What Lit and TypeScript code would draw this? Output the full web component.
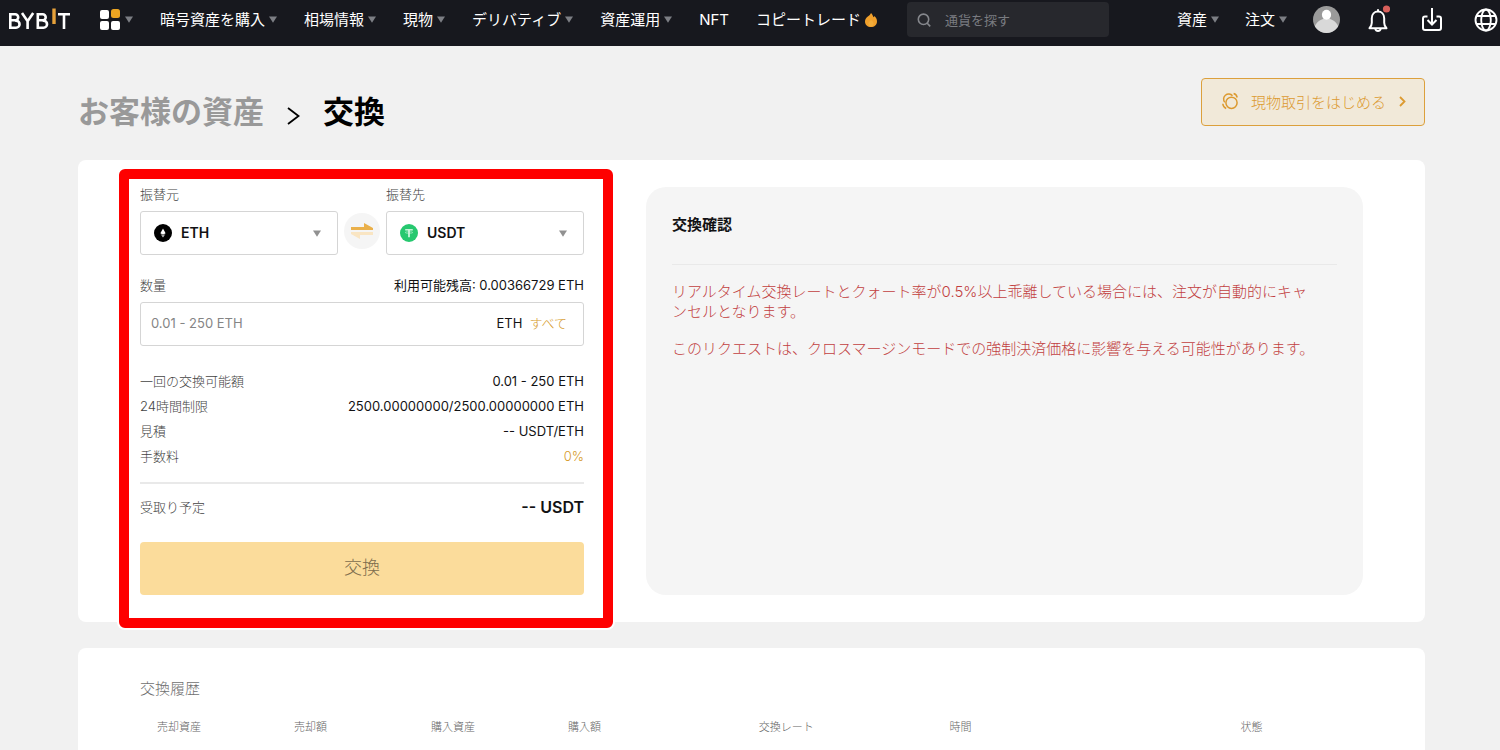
import { LitElement, html, css, nothing } from "lit";
import { customElement, property } from "lit/decorators.js";

const caret = html`<svg class="caret" viewBox="0 0 8 7" width="8" height="7" aria-hidden="true">
  <path d="M0 0.5h8L4 6.8z" fill="currentColor" />
</svg>`;

const sharedStyles = css`
  *,
  *::before,
  *::after {
    box-sizing: border-box;
  }
  svg {
    display: block;
    flex: none;
  }
  a {
    color: inherit;
    text-decoration: none;
  }
  button,
  input,
  select {
    font: inherit;
    color: inherit;
    margin: 0;
    padding: 0;
    border: 0;
    background: none;
  }
  button {
    cursor: pointer;
  }
`;

interface NavItem {
  label: string;
  menu?: boolean;
  hot?: boolean;
}

const NAV: NavItem[] = [
  { label: "暗号資産を購入", menu: true },
  { label: "相場情報", menu: true },
  { label: "現物", menu: true },
  { label: "デリバティブ", menu: true },
  { label: "資産運用", menu: true },
  { label: "NFT" },
  { label: "コピートレード", hot: true },
];

@customElement("site-header")
export class SiteHeader extends LitElement {
  static styles = [
    sharedStyles,
    css`
      :host {
        display: block;
      }
      .bar {
        display: flex;
        align-items: center;
        height: 46px;
        padding: 0 2px 7px 8px;
        background: #17181e;
        color: #fff;
        font-size: 15px;
        line-height: 24px;
        white-space: nowrap;
      }
      .apps {
        display: flex;
        align-items: center;
        gap: 4px;
        margin-left: 29px;
      }
      .caret {
        color: #7c7e84;
      }
      .nav {
        display: flex;
        align-items: center;
        gap: 27px;
        margin-left: 27px;
      }
      .item {
        display: flex;
        align-items: center;
        gap: 4px;
      }
      .search {
        display: flex;
        align-items: center;
        gap: 14px;
        width: 202px;
        height: 35px;
        margin-left: 30px;
        padding: 0 10px;
        border-radius: 4px;
        background: #27282d;
        color: #85878c;
      }
      .search input {
        flex: 1;
        min-width: 0;
        font-size: 13px;
        outline: none;
      }
      .search input::placeholder {
        color: #797b80;
        opacity: 1;
      }
      .account {
        display: flex;
        align-items: center;
        gap: 26px;
        margin-left: auto;
      }
      .tools {
        display: flex;
        align-items: center;
        gap: 30px;
      }
    `,
  ];

  render() {
    return html`<header class="bar">
      <a href="#" aria-label="Bybit">
        <svg width="62" height="24" viewBox="0 0 62 24" fill="none" stroke="#fff" stroke-width="2.6">
          <path d="M2.3 6.3v13.4M1 6.3h6.2a3 3 0 0 1 0 6H2.3M7.2 12.6h.8a3.4 3.4 0 0 1 0 7.1H1" />
          <path d="M14 5l5.6 8.3L25.2 5M19.6 12.5V21" />
          <path d="M29.8 6.3v13.4M28.5 6.3h6.2a3 3 0 0 1 0 6h-4.9M34.7 12.6h.8a3.4 3.4 0 0 1 0 7.1h-7" />
          <path d="M46 0.5v15.5" stroke="#e6a13a" stroke-width="3.4" />
          <path d="M50 6.3h12M56 6.3V21" />
        </svg>
      </a>
      <button class="apps" aria-label="Apps">
        <svg width="22" height="22" viewBox="0 0 22 22" fill="#fff">
          <rect x="1" y="1" width="9" height="9" rx="2" />
          <rect x="12" y="0" width="9" height="9" rx="2.5" fill="#eba422" />
          <rect x="1" y="12" width="9" height="9" rx="2" />
          <rect x="12" y="12" width="9" height="9" rx="2" />
        </svg>
        ${caret}
      </button>
      <nav class="nav">
        ${NAV.map(
          (item) => html`<a class="item" href="#">
            <span>${item.label}</span>
            ${item.menu ? caret : nothing}
            ${item.hot
              ? html`<svg width="12" height="14" viewBox="0 0 12 14">
                  <path
                    d="M6 0C7.400 1.500 8.100 2.900 8.500 4.300c.5-.3.800-.7.900-1.200C11.200 4.700 12 6.400 12 8.400 12 11.600 9.400 14 6 14S0 11.600 0 8.400C0 6.400 1.100 4.900 2.800 3.600 4.300 2.500 5.400 1.500 6 0z"
                    fill="#f0a02c"
                  />
                  <path d="M6 7c1.500 1.200 2.600 2.200 2.600 3.700A2.600 2.600 0 0 1 6 13.200a2.600 2.600 0 0 1-2.600-2.500C3.400 9.200 4.700 8.300 6 7z" fill="#f2ac3a" />
                </svg>`
              : nothing}
          </a>`
        )}
      </nav>
      <label class="search">
        <svg width="14" height="14" viewBox="0 0 14 14" fill="none" stroke="currentColor" stroke-width="1.600">
          <circle cx="6.500" cy="6.300" r="5.200" />
          <path d="M10 10l3.200 3.400" />
        </svg>
        <input type="search" placeholder="通貨を探す" aria-label="通貨を探す" />
      </label>
      <div class="account">
        <a class="item" href="#"><span>資産</span>${caret}</a>
        <a class="item" href="#"><span>注文</span>${caret}</a>
        <button aria-label="アカウント">
          <svg width="27" height="27" viewBox="0 0 27 27">
            <defs>
              <clipPath id="disc"><circle cx="13.500" cy="13.500" r="13.500" /></clipPath>
            </defs>
            <g clip-path="url(#disc)">
              <rect width="27" height="27" fill="#9a9a9a" />
              <path d="M0 27c.6-8 5.500-14.500 13.500-14.500S26.400 19 27 27z" fill="#d9d9d9" />
              <ellipse cx="13.500" cy="8.700" rx="4.600" ry="5" fill="#fff" />
            </g>
          </svg>
        </button>
        <div class="tools">
          <button aria-label="通知">
            <svg width="24" height="30" viewBox="0 0 24 30" fill="none" stroke="#fff" stroke-width="2">
              <path d="M12 4.200v2M3.500 23.300c1.700-1.800 2.300-3 2.300-5.500v-4.500c0-4 2.600-6.700 6.200-6.700s6.200 2.700 6.200 6.700v4.500c0 2.500.6 3.700 2.300 5.500z" stroke-linejoin="round" />
              <path d="M9.300 23.800c.4 1.600 1.300 2.300 2.700 2.300s2.300-.7 2.700-2.300" />
              <circle cx="20.500" cy="4" r="3.600" fill="#d9605b" stroke="none" />
            </svg>
          </button>
          <button aria-label="ダウンロード">
            <svg width="24" height="26" viewBox="0 0 24 26" fill="none" stroke="#fff" stroke-width="2">
              <path d="M7.500 9.500H5a2 2 0 0 0-2 2V21a2 2 0 0 0 2 2h14a2 2 0 0 0 2-2v-9.500a2 2 0 0 0-2-2h-2.500" />
              <path d="M12 1v16M7.500 13l4.500 4.500 4.500-4.500" />
            </svg>
          </button>
          <button aria-label="言語">
            <svg width="24" height="24" viewBox="0 0 24 24" fill="none" stroke="#fff" stroke-width="1.900">
              <circle cx="12" cy="12" r="10.500" />
              <ellipse cx="12" cy="12" rx="4.800" ry="10.500" />
              <path d="M2.500 8h19M2.500 16h19" />
            </svg>
          </button>
        </div>
      </div>
    </header>`;
  }
}

const ethCoin = html`<svg width="18" height="18" viewBox="0 0 18 18" aria-hidden="true">
  <circle cx="9" cy="9" r="9" fill="#000" />
  <path d="M9 4.600l2.600 4.600L9 10.800 6.400 9.200z" fill="#fff" />
  <path d="M6.600 10L9 11.500 11.400 10 9 13.400z" fill="#cfcfcf" />
</svg>`;

const usdtCoin = html`<svg width="18" height="18" viewBox="0 0 18 18" aria-hidden="true">
  <circle cx="9" cy="9" r="9" fill="#26c86f" />
  <g fill="none" stroke="#d5f6e3">
    <path d="M5.200 5.800h7.600" stroke-width="1.400" />
    <path d="M9 5.800v7.400" stroke-width="1.700" />
    <ellipse cx="9" cy="8.500" rx="3.800" ry=".8" stroke-width=".5" />
  </g>
</svg>`;

@customElement("coin-select")
export class CoinSelect extends LitElement {
  @property() label = "";
  @property() coin = "ETH";

  static styles = [
    sharedStyles,
    css`
      :host {
        display: block;
        min-width: 0;
      }
      .label {
        display: block;
        font-size: 13px;
        line-height: 14px;
        margin-bottom: 10px;
        color: #444;
        font-weight: 300;
      }
      .box {
        display: flex;
        align-items: center;
        height: 44px;
        padding: 0 16px 0 13px;
        border: 1px solid #d5d5d5;
        border-radius: 3px;
        background: #fff;
      }
      .box select {
        flex: 1;
        min-width: 0;
        height: 42px;
        padding-left: 9px;
        appearance: none;
        font-size: 14px;
        font-weight: 600;
        color: #121214;
        outline: none;
      }
      .caret {
        color: #919191;
      }
    `,
  ];

  render() {
    return html`<label class="label" for="coin">${this.label}</label>
      <div class="box">
        ${this.coin === "ETH" ? ethCoin : usdtCoin}
        <select id="coin">
          <option>${this.coin}</option>
        </select>
        ${caret}
      </div>`;
  }
}

const LIMITS = [
  { label: "一回の交換可能額", value: "0.01 - 250 ETH" },
  { label: "24時間制限", value: "2500.00000000/2500.00000000 ETH" },
  { label: "見積", value: "-- USDT/ETH" },
  { label: "手数料", value: "0%", accent: true },
];

@customElement("exchange-form")
export class ExchangeForm extends LitElement {
  static styles = [
    sharedStyles,
    css`
      :host {
        display: block;
        position: relative;
        font-size: 13px;
        line-height: 16px;
        color: #121214;
      }
      .highlight {
        position: absolute;
        inset: -18px -29px -33px -21px;
        border: 10px solid #fe0000;
        border-radius: 6px;
        box-shadow: 0 0 0 2px #fff;
        pointer-events: none;
      }
      .pair {
        display: grid;
        grid-template-columns: 1fr 48px 1fr;
        align-items: end;
      }
      .swap {
        display: grid;
        place-items: center;
        justify-self: center;
        width: 36px;
        height: 36px;
        margin-bottom: 6px;
        border-radius: 50%;
        background: #f5f5f5;
      }
      .line {
        display: flex;
        justify-content: space-between;
        align-items: center;
      }
      .amount {
        margin-top: 22px;
      }
      .muted {
        color: #444;
        font-weight: 300;
      }
      .accent {
        color: #d69a2a;
        font-weight: 300;
      }
      .field {
        display: flex;
        align-items: center;
        height: 44px;
        margin-top: 9px;
        padding: 0 16px 2px 10px;
        border: 1px solid #d5d5d5;
        border-radius: 3px;
        background: #fff;
      }
      .field input {
        flex: 1;
        min-width: 0;
        outline: none;
      }
      .field input::placeholder {
        color: #858585;
        opacity: 1;
      }
      .field button {
        margin-left: 7px;
      }
      .limits {
        display: grid;
        gap: 9px;
        margin: 27px 0 0;
        padding-bottom: 18px;
        border-bottom: 2px solid #e9e9e9;
      }
      .limits dt,
      .limits dd {
        margin: 0;
      }
      .receive {
        margin-top: 11px;
        line-height: 24px;
      }
      .total {
        font-size: 16px;
        font-weight: 600;
      }
      .submit {
        display: block;
        width: 100%;
        height: 53px;
        margin-top: 23px;
        padding-bottom: 2px;
        border-radius: 4px;
        background: #fbdc9b;
        color: #7d6c4d;
        font-size: 18px;
        font-weight: 300;
      }
    `,
  ];

  render() {
    return html`
      <div class="pair">
        <coin-select label="振替元" coin="ETH"></coin-select>
        <button class="swap" aria-label="入れ替え">
          <svg width="22" height="18" viewBox="0 0 22 18">
            <path d="M0 5h13V1l9 5v2H0z" fill="#eab04a" />
            <path d="M22 13H9v4l-9-5v-2h22z" fill="#f9e5c3" />
          </svg>
        </button>
        <coin-select label="振替先" coin="USDT"></coin-select>
      </div>
      <div class="line amount">
        <label class="muted" for="amount">数量</label>
        <span>利用可能残高: 0.00366729 ETH</span>
      </div>
      <div class="field">
        <input id="amount" type="text" inputmode="decimal" placeholder="0.01 - 250 ETH" />
        <span>ETH</span>
        <button class="accent">すべて</button>
      </div>
      <dl class="limits">
        ${LIMITS.map(
          (row) => html`<div class="line">
            <dt class="muted">${row.label}</dt>
            <dd class=${row.accent ? "accent" : ""}>${row.value}</dd>
          </div>`
        )}
      </dl>
      <div class="line receive">
        <span class="muted">受取り予定</span>
        <span class="total">-- USDT</span>
      </div>
      <button class="submit">交換</button>
      <div class="highlight"></div>
    `;
  }
}

const COLUMNS = ["売却資産", "売却額", "購入資産", "購入額", "交換レート", "時間", "状態"];

@customElement("exchange-history")
export class ExchangeHistory extends LitElement {
  static styles = [
    sharedStyles,
    css`
      :host {
        display: block;
      }
      .title {
        margin: 0 0 17px;
        font-size: 15px;
        font-weight: 300;
        line-height: 24px;
        color: #707070;
      }
      .table {
        width: 100%;
        table-layout: fixed;
        border-collapse: collapse;
        font-size: 11px;
        line-height: 18px;
        color: #666;
      }
      .table th {
        padding: 0 0 0 17px;
        text-align: left;
        font-weight: 300;
      }
      .narrow {
        width: 11.2%;
      }
      .medium {
        width: 15.6%;
      }
      .wide {
        width: 23.8%;
      }
    `,
  ];

  render() {
    return html`<h2 class="title">交換履歴</h2>
      <table class="table">
        <colgroup>
          <col class="narrow" /><col class="narrow" /><col class="narrow" />
          <col class="medium" /><col class="medium" /><col class="wide" /><col />
        </colgroup>
        <thead>
          <tr>
            ${COLUMNS.map((name) => html`<th scope="col">${name}</th>`)}
          </tr>
        </thead>
      </table>`;
  }
}

@customElement("app-root")
export class AppRoot extends LitElement {
  static styles = [
    sharedStyles,
    css`
      :host {
        display: block;
        min-height: 100vh;
        overflow: hidden;
        background: #f1f1f1;
        color: #121214;
        font-family: Inter, "Noto Sans CJK JP", sans-serif;
      }
      .page {
        padding: 32px 75px 0 78px;
      }
      .head {
        display: flex;
        justify-content: space-between;
        margin-bottom: 34px;
      }
      .crumbs {
        display: flex;
        align-items: center;
        align-self: flex-end;
        gap: 23px;
        margin: 0;
        font-size: 31px;
        font-weight: 700;
        line-height: 28px;
        color: #000;
      }
      .crumbs a {
        color: #999;
      }
      .crumbs svg {
        margin-top: 8px;
      }
      .spot {
        display: flex;
        align-items: center;
        height: 48px;
        padding: 0 18px 2px 19px;
        border: 1px solid #dca03c;
        border-radius: 4px;
        background: #f1e9d9;
        color: #dc9a30;
        font-size: 15px;
        font-weight: 300;
      }
      .spot span {
        margin: 0 13px 0 12px;
      }
      .card {
        border-radius: 8px;
        background: #fff;
      }
      .exchange {
        display: grid;
        grid-template-columns: 444fr 717fr;
        gap: 62px;
        padding: 27px 62px;
      }
      .confirm {
        padding: 26px;
        border-radius: 20px;
        background: #f5f5f5;
      }
      .confirm h2 {
        margin: 0 0 17px;
        padding-bottom: 28px;
        border-bottom: 1px solid #e9e9e9;
        font-size: 15px;
        line-height: 23px;
      }
      .confirm p {
        margin: 0 0 17px;
        font-size: 15px;
        font-weight: 300;
        line-height: 20px;
        color: #c23f3f;
      }
      .history {
        margin-top: 26px;
        padding: 29px 62px 40px;
      }
    `,
  ];

  render() {
    return html`<site-header></site-header>
      <main class="page">
        <div class="head">
          <h1 class="crumbs">
            <a href="#">お客様の資産</a>
            <svg width="13" height="18" viewBox="0 0 13 18" fill="none" stroke="#000" stroke-width="1.800">
              <path d="M1 1l10.500 8L1 17" />
            </svg>
            <span>交換</span>
          </h1>
          <button class="spot">
            <svg width="18" height="18" viewBox="0 0 18 18" fill="none" stroke="currentColor" stroke-width="1.500">
              <circle cx="10.500" cy="10.800" r="5.600" />
              <path d="M3.800 10.300A5 5 0 1 1 11.500 3.800M1.800 11.800c.2 2.400 1.300 3.900 3.400 4.700M12.600 1.500c2 .5 3.200 1.800 3.600 4" />
            </svg>
            <span>現物取引をはじめる</span>
            <svg width="7" height="11" viewBox="0 0 7 11" fill="none" stroke="currentColor" stroke-width="1.800">
              <path d="M1 1l4.500 4.500L1 10" />
            </svg>
          </button>
        </div>
        <section class="card exchange">
          <exchange-form></exchange-form>
          <aside class="confirm">
            <h2>交換確認</h2>
            <p>
              リアルタイム交換レートとクォート率が0.5%以上乖離している場合には、注文が自動的にキャ<br />ンセルとなります。
            </p>
            <p>このリクエストは、クロスマージンモードでの強制決済価格に影響を与える可能性があります。</p>
          </aside>
        </section>
        <section class="card history">
          <exchange-history></exchange-history>
        </section>
      </main>`;
  }
}
